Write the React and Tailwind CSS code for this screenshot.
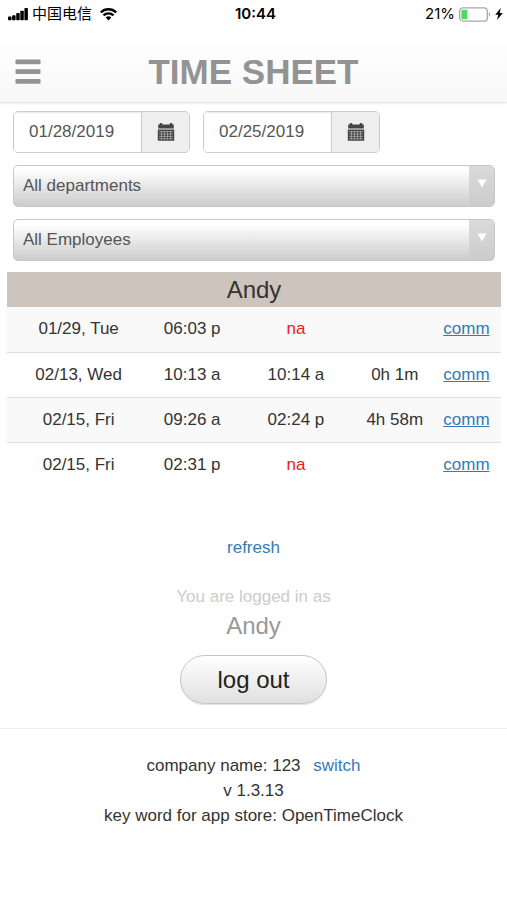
const punches = [
  { date: '01/29, Tue', timeIn: '06:03 p', timeOut: 'na', total: '' },
  { date: '02/13, Wed', timeIn: '10:13 a', timeOut: '10:14 a', total: '0h 1m' },
  { date: '02/15, Fri', timeIn: '09:26 a', timeOut: '02:24 p', total: '4h 58m' },
  { date: '02/15, Fri', timeIn: '02:31 p', timeOut: 'na', total: '' },
];

function StatusBar() {
  return (
    <div className="grid grid-cols-3 items-center h-7 pl-2 pr-1 text-black font-['Inter','Noto_Sans_CJK_SC',sans-serif]">
      <div className="flex items-center gap-1">
        <svg width="20" height="13" viewBox="0 0 20 13" fill="currentColor" aria-hidden="true">
          <rect x="0" y="8.4" width="3.5" height="3.8" rx="0.8" />
          <rect x="4.1" y="7.2" width="3.5" height="5" rx="0.8" />
          <rect x="8.2" y="5" width="3.5" height="7.2" rx="0.8" />
          <rect x="12.3" y="2.8" width="3.5" height="9.4" rx="0.8" />
          <rect x="16.4" y="0" width="3.5" height="12.2" rx="0.8" />
        </svg>
        <span className="text-[15px] leading-5">中国电信</span>
        <svg className="ml-1" width="17" height="13" viewBox="0 0 17 13" fill="none" stroke="currentColor" strokeWidth="2.3" aria-hidden="true">
          <path d="M0.8 4.4a11 11 0 0 1 15.4 0" />
          <path d="M3.5 7.4a7.1 7.1 0 0 1 10 0" />
          <path d="M8.5 12.4 5.7 9.6a4 4 0 0 1 5.6 0z" fill="currentColor" stroke="none" />
        </svg>
      </div>
      <div className="text-center text-[15px] leading-5 font-semibold">10:44</div>
      <div className="flex items-center justify-end gap-1">
        <span className="text-[15px] leading-5">21%</span>
        <svg width="32" height="15" viewBox="0 0 32 15" aria-hidden="true">
          <rect x="0.7" y="0.9" width="27.6" height="13.2" rx="3.2" fill="none" stroke="#a6a6a6" strokeWidth="1.3" />
          <rect x="2.4" y="2.8" width="6" height="9.4" rx="1" fill="#4cd964" />
          <path d="M29.8 5.2c1.8.6 1.8 4 0 4.6z" fill="#a6a6a6" />
        </svg>
        <svg width="8" height="12" viewBox="0 0 8 12" fill="currentColor" aria-hidden="true">
          <path d="M5.8 0 0.2 6.8h3.1L2 12l5.8-7H4.6z" />
        </svg>
      </div>
    </div>
  );
}

function CalendarIcon() {
  return (
    <svg width="18" height="18" viewBox="0 0 18 18" fill="#444" aria-hidden="true">
      <path d="M1.2 1.6h15.6V5.6H1.2z" />
      <rect x="2.6" y="0" width="2.8" height="3.4" rx="1" />
      <rect x="12.6" y="0" width="2.8" height="3.4" rx="1" />
      <path d="M0.8 6.6h16.4v11.2H0.8z" />
      <path d="M2 8.6h14M2 11h14M2 13.4h14M2 15.8h14M4.5 7.8v8.8M7.5 7.8v8.8M10.5 7.8v8.8M13.5 7.8v8.8" stroke="#b0b0b0" strokeWidth="0.7" />
    </svg>
  );
}

function DateField({ label, value }) {
  return (
    <div className="flex h-[42px] w-[177px] rounded-[5px] border border-[#ccc] overflow-hidden">
      <input
        type="text"
        aria-label={label}
        defaultValue={value}
        className="min-w-0 flex-1 pl-[15px] text-[17px] text-[#555] bg-white shadow-[inset_0_1px_1px_rgba(0,0,0,0.08)] outline-none"
      />
      <button type="button" aria-label={`Pick ${label}`} className="flex w-12 items-center justify-center border-l border-[#ccc] bg-[#eee]">
        <CalendarIcon />
      </button>
    </div>
  );
}

function FilterSelect({ label, option }) {
  return (
    <div className="relative h-[42px] rounded-[5px] border border-[#c8c8c8] bg-linear-to-b from-white from-10% to-[#ccc] overflow-hidden">
      <select aria-label={label} className="block h-full w-full appearance-none bg-transparent pl-[9px] pr-8 text-[17px] text-[#555] outline-none">
        <option>{option}</option>
      </select>
      <div className="pointer-events-none absolute inset-y-0 right-0 flex w-[25px] justify-center bg-linear-to-b from-[#dadada] to-[#ccc] pt-[13px]">
        <svg width="10" height="9" viewBox="0 0 10 9" aria-hidden="true">
          <path d="M0.5 0.5h9L5 8.5z" fill="#fff" />
        </svg>
      </div>
    </div>
  );
}

function PunchTable() {
  return (
    <table className="w-full table-fixed border-collapse text-center text-[17px] leading-6">
      <caption className="h-[35px] bg-[#cdc4be] text-2xl leading-[35px]">Andy</caption>
      <colgroup>
        <col className="w-[29%]" />
        <col className="w-[17%]" />
        <col className="w-[25%]" />
        <col className="w-[15%]" />
        <col className="w-[14%]" />
      </colgroup>
      <tbody>
        {punches.map((p, i) => (
          <tr key={i} className="h-[45px] border-b border-[#ddd] odd:bg-[#f9f9f9] even:bg-white last:border-b-0">
            <td>{p.date}</td>
            <td>{p.timeIn}</td>
            <td className={p.timeOut === 'na' ? 'text-[#f01818]' : ''}>{p.timeOut}</td>
            <td>{p.total}</td>
            <td>
              <a href="#comm" className="text-[#337ab7] underline">comm</a>
            </td>
          </tr>
        ))}
      </tbody>
    </table>
  );
}

export default function App() {
  return (
    <div className="min-h-screen bg-white text-[#333] font-['Liberation_Sans',Arial,sans-serif]">
      <header className="border-b border-[#e4e4e4] bg-linear-to-b from-white from-30% to-[#f8f8f8] shadow-[0_1px_2px_rgba(0,0,0,0.06)]">
        <StatusBar />
        <div className="grid grid-cols-[40px_1fr_40px] items-center px-[15px] pt-6 pb-[10px]">
          <button type="button" aria-label="Menu" className="w-[26px]">
            <svg width="26" height="26" viewBox="0 0 26 26" fill="#939393" aria-hidden="true">
              <rect x="0.5" y="0.5" width="25" height="4.8" rx="0.7" />
              <rect x="0.5" y="10.2" width="25" height="4.8" rx="0.7" />
              <rect x="0.5" y="20" width="25" height="4.8" rx="0.7" />
            </svg>
          </button>
          <h1 className="text-center text-[35px] leading-10 font-bold text-[#939393]">TIME SHEET</h1>
        </div>
      </header>

      <main>
        <div className="flex flex-col gap-3 pl-[13px] pr-3 pt-2 pb-[11px]">
          <div className="flex gap-[13px]">
            <DateField label="start date" value="01/28/2019" />
            <DateField label="end date" value="02/25/2019" />
          </div>
          <FilterSelect label="Department" option="All departments" />
          <FilterSelect label="Employee" option="All Employees" />
        </div>

        <div className="pl-[7px] pr-[6px]">
          <PunchTable />
        </div>

        <div className="flex flex-col items-center pt-[49px] pb-6">
          <a href="#refresh" className="text-[17px] leading-6 text-[#337ab7]">refresh</a>
          <p className="mt-[25px] text-[17px] leading-6 text-[#ccc]">You are logged in as</p>
          <p className="mt-[3px] text-2xl leading-7 text-[#999]">Andy</p>
          <button
            type="button"
            className="mt-[15px] h-[49px] rounded-full border border-[#c4c4c4] bg-linear-to-b from-white to-[#e0e0e0] px-9 text-2xl text-[#222] shadow-[0_1px_1px_rgba(0,0,0,0.12)]"
          >
            log out
          </button>
        </div>
      </main>

      <footer className="border-t border-[#eee] pt-6 text-center text-[17px] leading-[25px]">
        <p>
          company name: 123 <a href="#switch" className="ml-2 text-[#337ab7]">switch</a>
        </p>
        <p>v 1.3.13</p>
        <p>key word for app store: OpenTimeClock</p>
      </footer>
    </div>
  );
}
